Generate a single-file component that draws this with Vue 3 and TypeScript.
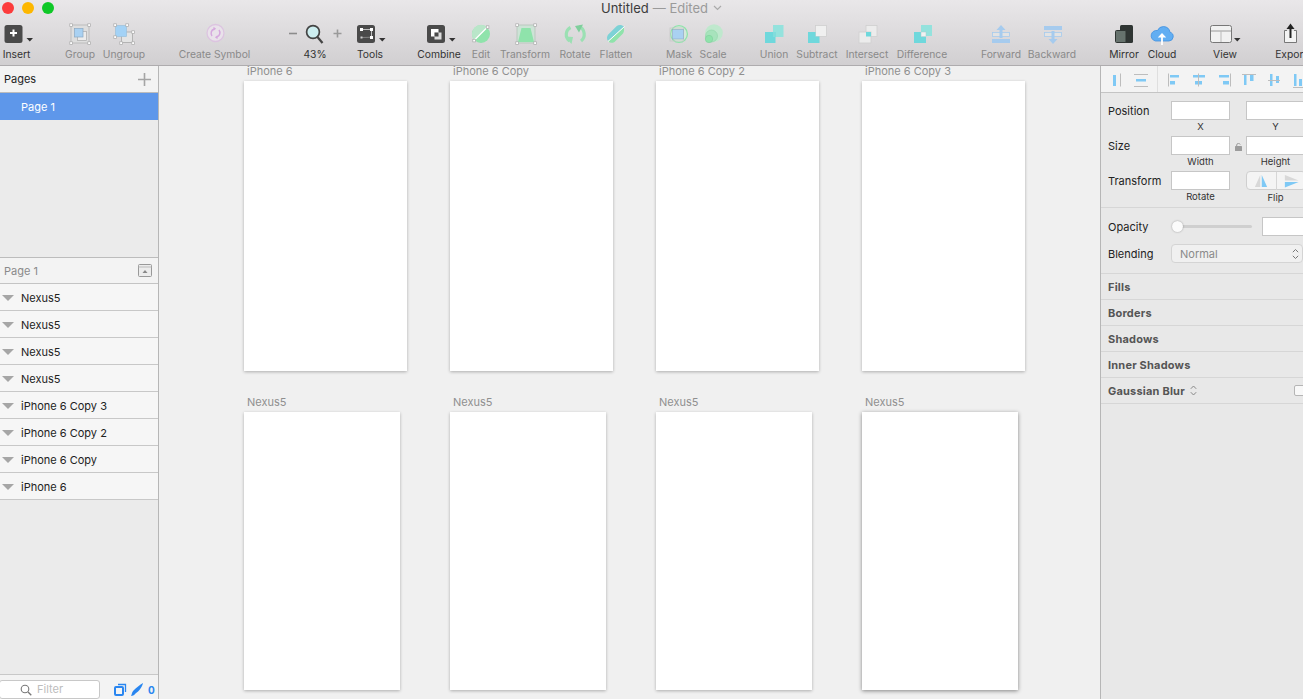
<script setup lang="ts">
interface Tool { label: string; c: number; on?: boolean; icon: string }

const h = (x: number, y: number) =>
  `<rect x="${x - 1.2}" y="${y - 1.2}" width="2.6" height="2.6" fill="#fff" stroke="#a9a9a9" stroke-width=".7"/>`
const tri = (x: number) => `<path d="M${x - 3} 38h6.5l-3.2 3.4z" fill="#333"/>`
const darkBox = (x: number) => `<rect x="${x}" y="25" width="18" height="18" rx="2.5" fill="#4a4a4a"/>`

const tools: Tool[] = [
  { label: 'Insert', c: 16.5, on: true, icon: darkBox(4) + '<path d="M13 29.5v7M9.5 33h7" stroke="#fff" stroke-width="2"/>' + tri(29) },
  { label: 'Group', c: 80, icon: '<rect x="71" y="25" width="18" height="18" fill="#dedede" stroke="#b5b5b5" stroke-width=".8"/><rect x="77.5" y="31.5" width="9" height="9" fill="#ececec" stroke="#aaa" stroke-width=".7"/><rect x="74.5" y="28.5" width="8.5" height="8.5" fill="#a9d1f2" stroke="#8aa9c4" stroke-width=".7"/>' + h(71, 25) + h(89, 25) + h(71, 43) + h(89, 43) },
  { label: 'Ungroup', c: 124, icon: '<rect x="121.5" y="32" width="11" height="10.5" fill="#e4e4e4" stroke="#a9a9a9" stroke-width=".8"/><rect x="115.5" y="25.5" width="11" height="11" fill="#a3d2f6" stroke="#9cc0db" stroke-width=".7"/>' + h(115, 25) + h(127, 25) + h(115, 37) + h(133, 32) + h(121, 43) + h(133, 43) },
  { label: 'Create Symbol', c: 214.5, icon: '<circle cx="215" cy="33" r="8.5" fill="#e9e2ea" stroke="#dcc4e0" stroke-width="1.3"/><path d="M211.5 36a4.6 4.6 0 0 1 2-7M218.5 30a4.6 4.6 0 0 1-2 7" fill="none" stroke="#d5a8de" stroke-width="1.5"/><path d="M213 26.8v4l2.6-2zM217 39.2v-4l-2.6 2z" fill="#d5a8de"/>' },
  { label: '43%', c: 315, on: true, icon: '<path d="M289 33.5h8" stroke="#8c8c8c" stroke-width="1.6"/><path d="M333.5 33.5h8M337.5 29.5v8" stroke="#9a9a9a" stroke-width="1.6"/><circle cx="313" cy="32" r="6.4" fill="#cdeef0" stroke="#444" stroke-width="1.7"/><path d="M317.5 37l5 6" stroke="#444" stroke-width="2.2"/>' },
  { label: 'Tools', c: 370, on: true, icon: darkBox(357) + '<path d="M362 29.5h9.5V37" fill="none" stroke="#ddd" stroke-width=".8"/><path d="M361.5 37.500l8.500-.2" stroke="#999" stroke-width=".7"/><path d="M360 28h3v3h-3zM370 28h3v3h-3zM370 36h3v3h-3z" fill="#fff"/><rect x="360.5" y="36.5" width="2" height="2" fill="#ccc"/>' + tri(382) },
  { label: 'Combine', c: 439, on: true, icon: darkBox(427) + '<rect x="431" y="29" width="7.5" height="7.5" fill="#fff"/><rect x="434.5" y="32.5" width="7" height="7" fill="#ddd"/><rect x="434.5" y="32.5" width="4" height="4" fill="#4a4a4a"/>' + tri(452) },
  { label: 'Edit', c: 481, icon: '<circle cx="481" cy="34" r="9" fill="#8fe3ab"/><path d="M474.5 40.5a9 9 0 0 1 13-13z" fill="#b9e6c9"/><path d="M473.5 41l14.5-14.5" stroke="#fff" stroke-width="1.3"/>' + h(474, 40.5) + h(487.5, 27) },
  { label: 'Transform', c: 525, icon: '<rect x="517" y="25" width="18" height="18" fill="#cde3d6" stroke="#b5c4ba" stroke-width=".8"/><path d="M521.5 28h9l3.5 14h-16z" fill="#8fe3ab"/>' + h(517, 25) + h(535, 25) + h(517, 43) + h(535, 43) },
  { label: 'Rotate', c: 575, icon: '<path d="M570.5 27.5a8 8 0 0 0-1 13.5" fill="none" stroke="#9be0b3" stroke-width="3.2"/><path d="M564.5 36.5l8.5.5-1.5 7z" fill="#9be0b3"/><path d="M579 26.5a8.5 8.5 0 0 1 2 14.5" fill="none" stroke="#9be0b3" stroke-width="3.2"/><path d="M583 24.5l-8 1.5 4 6.5z" fill="#7fcf9c"/>' },
  { label: 'Flatten', c: 616, icon: '<path d="M624 30a5.500 5.500 0 0 1-1 3.500l-8.500 8.500a5.500 5.500 0 0 1-6.500-.8l16-14.500z" fill="#8fe3ab"/><path d="M608 41c-1.500-2-1.300-5 .5-6.800l8-8c2.300-1.700 5.500-1.500 7.500.5z" fill="#7dd2d6"/><path d="M608 41.5l16.5-15" stroke="#fff" stroke-width="1"/>' },
  { label: 'Mask', c: 679, icon: '<circle cx="679" cy="34" r="8.4" fill="#d5e8da" stroke="#8fe3ab" stroke-width="1.3"/><rect x="670" y="28" width="13.5" height="13" fill="none" stroke="#c9c9c9" stroke-width=".8"/><rect x="672.5" y="29.5" width="11" height="9.5" fill="#a9d1f2" stroke="#8fa9c0" stroke-width=".6"/>' },
  { label: 'Scale', c: 713, icon: '<circle cx="714" cy="33" r="8.8" fill="#bfe8cd"/><circle cx="711.5" cy="36" r="6" fill="#a7e3bc" stroke="#90d5a8" stroke-width=".6"/><circle cx="709" cy="39" r="3.7" fill="#8fe3ab" stroke="#80cf9c" stroke-width=".6"/>' },
  { label: 'Union', c: 774, icon: '<rect x="773" y="25" width="10.5" height="12" fill="#94e2dd"/><rect x="765" y="32" width="10.5" height="11" fill="#6fd8dc"/><rect x="773" y="32" width="2.5" height="5" fill="#82dddc"/>' },
  { label: 'Subtract', c: 817, icon: '<rect x="815.5" y="25.5" width="11" height="11" fill="#f0f0f0" stroke="#cfcfcf" stroke-width=".8"/><path d="M808 32h7.5v4.5h4V43H808z" fill="#6fd8dc"/>' },
  { label: 'Intersect', c: 867, icon: '<rect x="866" y="25.5" width="11" height="11" fill="#ececec" stroke="#cfcfcf" stroke-width=".8"/><rect x="859" y="32" width="12" height="11" fill="#ececec" stroke="#cfcfcf" stroke-width=".8"/><rect x="866" y="32" width="5" height="4.5" fill="#6fd8dc"/>' },
  { label: 'Difference', c: 922, icon: '<path d="M921 25h11v11h-6v-4h-5z" fill="#94e2dd"/><path d="M914 32h7v4.5h5V43h-12z" fill="#6fd8dc"/><rect x="921" y="32" width="5" height="4.5" fill="#f1f1f1" stroke="#a9cfcf" stroke-width=".5"/>' },
  { label: 'Forward', c: 1001, icon: '<rect x="992.5" y="32.5" width="17" height="4" fill="#e3e3e3" stroke="#a6cbee" stroke-width=".8"/><rect x="992" y="39" width="18" height="4" fill="#a6cbee"/><path d="M1001 25l4.5 5h-3v8h-3v-8h-3z" fill="#a6cbee"/>' },
  { label: 'Backward', c: 1052, icon: '<rect x="1044" y="26" width="18" height="4" fill="#a6cbee"/><rect x="1044.5" y="32.5" width="17" height="4" fill="#e3e3e3" stroke="#a6cbee" stroke-width=".8"/><path d="M1053 44l-4.5-5h3v-8h3v8h3z" fill="#a6cbee"/>' },
  { label: 'Mirror', c: 1124, on: true, icon: '<rect x="1120" y="25" width="13" height="18" rx="1.5" fill="#2f3533"/><rect x="1115.5" y="30.5" width="10.5" height="12" rx="1" fill="#66726d" stroke="#2f3533"/>' },
  { label: 'Cloud', c: 1162, on: true, icon: '<path d="M1155.5 41h13.5a4.5 4.5 0 0 0 1-8.800 7 7 0 0 0-6.500-5.700 6.500 6.500 0 0 0-6 4 5.200 5.200 0 0 0-2 10.500z" fill="#62aef2" stroke="#3f8fe0" stroke-width=".8"/><path d="M1162 45v-9" stroke="#fff" stroke-width="1.8"/><path d="M1157.8 37.5l4.2-4.5 4.200 4.500z" fill="#fff"/>' },
  { label: 'View', c: 1225, on: true, icon: '<rect x="1210.5" y="25.5" width="21" height="17" rx="2" fill="#f1f1f1" stroke="#777"/><path d="M1211 31h20" stroke="#999"/><path d="M1221 31v11" stroke="#b9b9b9"/>' + tri(1237) },
  { label: 'Export', c: 1291, on: true, icon: '<path d="M1287 30.5h-2.5v12h12v-12H1294" fill="#f3f3f3" stroke="#777"/><path d="M1290.5 38V26" stroke="#222" stroke-width="2"/><path d="M1286.5 29l4-5.500 4 5.500z" fill="#222"/>' },
]

const TOOL_W = 40
const placed = tools.map((t, i) => ({
  ...t,
  gap: i === 0 ? t.c - TOOL_W / 2 : t.c - tools[i - 1].c - TOOL_W,
  box: `${t.c - 30} 21 60 24`,
}))

const layers = ['Nexus5', 'Nexus5', 'Nexus5', 'Nexus5', 'iPhone 6 Copy 3', 'iPhone 6 Copy 2', 'iPhone 6 Copy', 'iPhone 6']
const boardsTop = ['iPhone 6', 'iPhone 6 Copy', 'iPhone 6 Copy 2', 'iPhone 6 Copy 3']
const boardsBottom = ['Nexus5', 'Nexus5', 'Nexus5', 'Nexus5']
const sections = ['Fills', 'Borders', 'Shadows', 'Inner Shadows']
</script>

<template>
  <div class="app">
    <header class="toolbar">
      <div class="titlebar">
        <div class="lights">
          <span class="light red"></span>
          <span class="light amber"></span>
          <span class="light green"></span>
        </div>
        <div class="title">
          Untitled <span class="edited">— Edited</span>
          <svg class="title-chev" width="9" height="6" viewBox="0 0 9 6"><path d="M1 1l3.500 3.500L8 1" fill="none" stroke="#aaa" stroke-width="1.200"/></svg>
        </div>
      </div>
      <div class="tools">
        <div
          v-for="t in placed"
          :key="t.label"
          class="tool"
          :class="{ on: t.on }"
          :style="{ marginLeft: t.gap + 'px' }"
        >
          <svg class="tool-icon" width="60" height="24" :viewBox="t.box" v-html="t.icon"></svg>
          <span class="tool-label">{{ t.label }}</span>
        </div>
      </div>
    </header>

    <div class="body">
      <aside class="left">
        <div class="pages-head">
          <span>Pages</span>
          <svg width="13" height="13" viewBox="0 0 13 13"><path d="M6.500 0v13M0 6.500h13" stroke="#a5a5a5" stroke-width="1.600"/></svg>
        </div>
        <div class="page-row">Page 1</div>
        <div class="pages-empty"></div>
        <div class="layers-head">
          <span>Page 1</span>
          <svg width="14" height="13" viewBox="0 0 14 13"><rect x=".5" y=".5" width="13" height="12" rx="1" fill="#ececec" stroke="#999"/><path d="M.5 3h13" stroke="#bbb"/><path d="M4.500 9l2.500-3 2.500 3z" fill="#888"/></svg>
        </div>
        <div v-for="(l, i) in layers" :key="i" class="layer">
          <svg width="12" height="6" viewBox="0 0 12 6"><path d="M0 0h12L6 6z" fill="#a6a6a6"/></svg>
          <span>{{ l }}</span>
        </div>
        <div class="layers-empty"></div>
        <div class="filter-bar">
          <div class="filter">
            <svg width="12" height="12" viewBox="0 0 12 12"><circle cx="5" cy="5" r="3.800" fill="none" stroke="#777" stroke-width="1.100"/><path d="M8 8l3.300 3.300" stroke="#777" stroke-width="1.300"/></svg>
            <span class="filter-text">Filter</span>
          </div>
          <svg class="filter-ic" width="13" height="13" viewBox="0 0 13 13"><rect x="1" y="4" width="8" height="8" rx="1" fill="none" stroke="#2a86f0" stroke-width="2"/><path d="M4 1.500h7.500V9" fill="none" stroke="#2a86f0" stroke-width="1.300"/></svg>
          <svg class="filter-ic" width="12" height="13" viewBox="0 0 12 13"><path d="M12 0C11.500 3.500 8 8.500 4.500 10.500 3 12.500 1.500 12.800 0 13c1-1.500.5-3.500 2.500-5.500C5 5 9 1.500 12 0z" fill="#2a86f0"/></svg>
          <span class="filter-count">0</span>
        </div>
      </aside>

      <main class="canvas">
        <div class="boards">
          <div v-for="(b, i) in boardsTop" :key="i" class="board-cell">
            <div class="board-name">{{ b }}</div>
            <div class="board tall"></div>
          </div>
        </div>
        <div class="boards second">
          <div v-for="(b, i) in boardsBottom" :key="i" class="board-cell">
            <div class="board-name">{{ b }}</div>
            <div class="board short" :class="{ picked: i === 3 }"></div>
          </div>
        </div>
      </main>

      <aside class="right">
        <div class="align-bar">
          <svg width="202" height="26" viewBox="1101 66 202 26">
            <g fill="#7fc9f5">
              <rect x="1113" y="75" width="3" height="11" />
              <rect x="1136" y="79" width="10" height="2.500" />
              <rect x="1170" y="75" width="9" height="2.500" /><rect x="1170" y="81" width="5" height="3.500" />
              <rect x="1193" y="75" width="12" height="2.500" /><rect x="1195" y="81" width="7" height="3.500" />
              <rect x="1219" y="75" width="10" height="2.500" /><rect x="1223" y="81" width="6" height="3.500" />
              <rect x="1244" y="75" width="2.500" height="10" /><rect x="1250" y="75" width="3.500" height="6" />
              <rect x="1270" y="74" width="2.500" height="12" /><rect x="1276" y="76" width="3" height="7" />
              <rect x="1294" y="74" width="2.500" height="12" /><rect x="1299" y="79" width="3" height="7" />
            </g>
            <g stroke="#bdbdbd" fill="none">
              <path d="M1120.500 73.500v13M1134 74.500h14M1134 86.500h14M1168.500 73.500v13M1198.500 73.500v13M1230.500 73.500v13M1242 74.500h14M1268 80.500h12M1293 87.500h10" />
              <path d="M1157.500 66v26" stroke="#dfdfdf" />
            </g>
          </svg>
        </div>

        <div class="geometry">
          <div class="geo-row">
            <span class="lab">Position</span>
            <div class="pair"><div class="box"></div><small>X</small></div>
            <i class="mid"></i>
            <div class="pair"><div class="box"></div><small>Y</small></div>
          </div>
          <div class="geo-row">
            <span class="lab">Size</span>
            <div class="pair"><div class="box"></div><small>Width</small></div>
            <i class="mid">
              <svg width="7" height="8" viewBox="0 0 7 8"><rect y="3" width="7" height="5" rx=".6" fill="#9b9b9b"/><path d="M1.700 3V2a1.800 1.800 0 0 1 3.500-.4" fill="none" stroke="#9b9b9b"/></svg>
            </i>
            <div class="pair"><div class="box"></div><small>Height</small></div>
          </div>
          <div class="geo-row">
            <span class="lab">Transform</span>
            <div class="pair"><div class="box"></div><small>Rotate</small></div>
            <i class="mid"></i>
            <div class="pair">
              <div class="flip">
                <svg width="29" height="18" viewBox="0 0 29 18"><path d="M13.500 3v12L8 15z" fill="#d8d8d8"/><path d="M15 3v12h5.500z" fill="#7fc9f5"/></svg>
                <svg width="29" height="18" viewBox="0 0 29 18"><path d="M8 8.500h14L8 3z" fill="#d8d8d8"/><path d="M8 10h14L8 15.500z" fill="#7fc9f5"/></svg>
              </div>
              <small class="flip-cap">Flip</small>
            </div>
          </div>
        </div>

        <div class="style-block">
          <div class="style-row">
            <span class="lab">Opacity</span>
            <div class="slider"><span class="knob"></span></div>
            <div class="box opacity-box"></div>
          </div>
          <div class="style-row">
            <span class="lab">Blending</span>
            <div class="select">
              <span>Normal</span>
              <svg width="7" height="12" viewBox="0 0 7 12"><path d="M.8 4.200L3.500 1.500l2.700 2.700M.8 7.800l2.700 2.700 2.700-2.700" fill="none" stroke="#777"/></svg>
            </div>
          </div>
        </div>

        <div v-for="s in sections" :key="s" class="section">{{ s }}</div>
        <div class="section">
          Gaussian Blur
          <svg class="sec-chev" width="7" height="11" viewBox="0 0 7 11"><path d="M.8 3.800L3.500 1l2.700 2.800M.8 7.200L3.500 10l2.700-2.800" fill="none" stroke="#888"/></svg>
          <span class="check"></span>
        </div>
      </aside>
    </div>
  </div>
</template>

<style scoped>
.app {
  width: 1303px;
  height: 699px;
  display: flex;
  flex-direction: column;
  overflow: hidden;
  font-family: Inter, "Liberation Sans", sans-serif;
  font-size: 11px;
  color: #333;
}

.toolbar {
  height: 65px;
  flex: none;
  background: linear-gradient(#e9e7e9, #d1cfd1);
  border-bottom: 1px solid #aeacae;
  box-sizing: content-box;
  overflow: hidden;
  position: relative;
  z-index: 1;
}
.titlebar {
  height: 16px;
  display: grid;
  grid-template-columns: 1fr auto 1fr;
  padding-left: 20px;
  align-items: center;
}
.lights {
  display: flex;
  gap: 8px;
  margin-left: -18px;
}
.light {
  width: 12px;
  height: 12px;
  border-radius: 50%;
}
.red { background: #fc3c3c; }
.amber { background: #fdb700; }
.green { background: #0fc827; }
.title {
  font-size: 13px;
  color: #3c3c3c;
  white-space: nowrap;
  display: flex;
  align-items: center;
  gap: 4px;
}
.edited { color: #9a9a9a; }
.title-chev { margin-left: 1px; }

.tools {
  display: flex;
  margin-top: 5px;
}
.tool {
  flex: none;
  width: 40px;
  display: flex;
  flex-direction: column;
  align-items: center;
  color: #8a8a8a;
}
.tool.on { color: #333; }
.tool-icon {
  flex: none;
  overflow: visible;
}
.tool-label {
  white-space: nowrap;
  font-size: 10.3px;
  line-height: 12px;
  margin-top: 3px;
}

.body {
  flex: 1;
  min-height: 0;
  display: flex;
}

.left {
  width: 158px;
  flex: none;
  border-right: 1px solid #b6b6b6;
  display: flex;
  flex-direction: column;
  background: #ebebeb;
}
.pages-head {
  height: 26px;
  flex: none;
  background: #f3f3f3;
  border-bottom: 1px solid #bcbcbc;
  display: flex;
  align-items: center;
  justify-content: space-between;
  padding: 0 7px 0 4px;
  color: #222;
}
.page-row {
  height: 27px;
  flex: none;
  background: #5e97ea;
  color: #fff;
  line-height: 28px;
  padding-left: 21px;
}
.pages-empty {
  height: 137px;
  flex: none;
}
.layers-head {
  height: 25px;
  flex: none;
  box-sizing: content-box;
  border-top: 1px solid #bcbcbc;
  border-bottom: 1px solid #c4c4c4;
  background: #f3f3f3;
  display: flex;
  align-items: center;
  justify-content: space-between;
  padding: 0 6px 0 4px;
  color: #8a8a8a;
}
.layer {
  height: 25px;
  flex: none;
  box-sizing: content-box;
  border-bottom: 1px solid #c8c8c8;
  background: #f6f6f6;
  display: flex;
  align-items: center;
  gap: 7px;
  padding: 1px 0 0 2px;
  color: #222;
}
.layers-empty { flex: 1; }
.filter-bar {
  height: 25px;
  flex: none;
  box-sizing: border-box;
  border-top: 1px solid #c8c8c8;
  background: #f3f3f3;
  display: flex;
  align-items: center;
  padding-top: 5px;
}
.filter {
  width: 101px;
  height: 19px;
  margin-left: -1px;
  box-sizing: border-box;
  border: 1px solid #c8c8c8;
  border-radius: 3px;
  background: #fff;
  display: flex;
  align-items: center;
  gap: 5px;
  padding-left: 20px;
  margin-right: 14px;
  color: #bdbdbd;
}
.filter-text { margin-top: -2px; }
.filter-ic { margin-right: 4px; }
.filter-count {
  color: #2a86f0;
  font-size: 10px;
  font-weight: 700;
  margin-left: 1px;
}

.canvas {
  flex: 1;
  min-width: 0;
  background: #f0f0f0;
  padding-left: 85px;
}
.boards {
  display: flex;
  gap: 43px;
}
.boards.second { margin-top: 26px; }
.board-cell { width: 163px; flex: none; }
.board-name {
  height: 10px;
  line-height: 10px;
  margin-bottom: 5px;
  padding-left: 3px;
  color: #8f8f8f;
  white-space: nowrap;
}
.board {
  background: #fff;
  box-shadow: 0 1px 3px rgba(0, 0, 0, .28);
}
.board.tall { width: 163px; height: 290px; }
.board.short { width: 156px; height: 278px; }
.board.picked { box-shadow: 0 1px 4px rgba(0, 0, 0, .45); }

.right {
  width: 202px;
  flex: none;
  border-left: 1px solid #b6b6b6;
  background: #e8e8e8;
  overflow: hidden;
}
.align-bar {
  height: 26px;
  background: #f3f3f3;
  border-bottom: 1px solid #c4c4c4;
}
.align-bar svg { display: block; }
.geometry {
  height: 115px;
  padding: 8px 0 0 7px;
  box-sizing: border-box;
  border-bottom: 1px solid #d6d6d6;
  width: 240px;
}
.geo-row {
  height: 35px;
  display: flex;
}
.lab {
  width: 63px;
  flex: none;
  line-height: 20px;
  color: #222;
}
.pair { width: 59px; flex: none; text-align: center; }
.mid {
  width: 16px;
  flex: none;
  display: flex;
  justify-content: center;
  padding-top: 7px;
  box-sizing: border-box;
  height: 19px;
}
.box {
  height: 19px;
  box-sizing: border-box;
  background: #fff;
  border: 1px solid #c6c6c6;
}
small {
  display: block;
  font-size: 9.5px;
  line-height: 14px;
  color: #333;
}
.flip {
  height: 19px;
  box-sizing: border-box;
  width: 60px;
  border: 1px solid #cfcfcf;
  border-radius: 4px;
  background: #f4f4f4;
  display: flex;
}
.flip svg + svg { border-left: 1px solid #d6d6d6; }
.flip-cap { margin-top: 1px; }
.style-block {
  height: 66px;
  box-sizing: border-box;
  border-bottom: 1px solid #d6d6d6;
  padding: 9px 0 0 7px;
  width: 240px;
}
.style-row {
  height: 27px;
  display: flex;
  align-items: flex-start;
}
.slider {
  width: 80px;
  height: 3px;
  margin: 8px 10px 0 1px;
  border-radius: 2px;
  background: #cfcfcf;
  position: relative;
}
.knob {
  position: absolute;
  left: 0;
  top: -4px;
  width: 11px;
  height: 11px;
  border-radius: 50%;
  background: #fbfbfb;
  box-shadow: 0 0 2px rgba(0, 0, 0, .35);
}
.opacity-box { width: 59px; }
.select {
  width: 132px;
  height: 19px;
  box-sizing: border-box;
  border: 1px solid #d4d4d4;
  border-radius: 4px;
  background: #f0f0f0;
  color: #8a8a8a;
  display: flex;
  align-items: center;
  justify-content: space-between;
  padding: 0 3px 0 8px;
}
.section {
  height: 26px;
  box-sizing: border-box;
  border-bottom: 1px solid #d6d6d6;
  padding-left: 7px;
  font-weight: 700;
  color: #555;
  letter-spacing: .2px;
  display: flex;
  align-items: center;
  position: relative;
}
.sec-chev { margin-left: 5px; }
.check {
  position: absolute;
  left: 193px;
  top: 7px;
  width: 14px;
  height: 11px;
  box-sizing: border-box;
  border: 1px solid #b5b5b5;
  border-radius: 2px;
  background: #f8f8f8;
}
</style>
